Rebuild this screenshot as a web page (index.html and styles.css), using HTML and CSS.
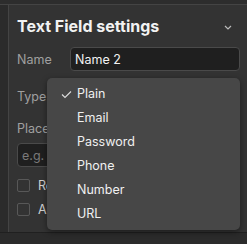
FILE: index.html
```html
<!DOCTYPE html>
<html lang="en">
<head>
    <meta charset="UTF-8">
    <title>Text Field settings</title>
    <link rel="stylesheet" href="styles.css">
</head>
<body>
    <div class="topbar"></div>
    <div class="main">
        <div class="rail"></div>
        <div class="panel">
            <div class="panel-head">
                <h1 class="panel-title">Text Field settings</h1>
                <svg class="chevron" width="8" height="5" viewBox="0 0 8 5">
                    <path d="M1 1 L4 4 L7 1" fill="none" stroke="#bbb" stroke-width="1.2"/>
                </svg>
            </div>

            <div class="field-row">
                <label class="field-label">Name</label>
                <input class="field-input" type="text" value="Name 2">
            </div>

            <div class="field-row">
                <label class="field-label">Type</label>
            </div>

            <div class="field-stack">
                <label class="field-label">Placeholder</label>
                <input class="field-input wide" type="text" placeholder="e.g. Enter your name">
            </div>

            <div class="check-row"><span class="checkbox"></span><span>Required</span></div>
            <div class="check-row"><span class="checkbox"></span><span>Autofocus</span></div>

            <!-- menu aberto do campo Type -->
            <ul class="menu">
                <li class="menu-item selected">
                    <svg class="check" width="11" height="9" viewBox="0 0 11 9">
                        <path d="M1 4.5 L4 7.5 L10 1.5" fill="none" stroke="#ddd" stroke-width="1.1"/>
                    </svg>
                    Plain
                </li>
                <li class="menu-item">Email</li>
                <li class="menu-item">Password</li>
                <li class="menu-item">Phone</li>
                <li class="menu-item">Number</li>
                <li class="menu-item">URL</li>
            </ul>
        </div>
    </div>
    <div class="footer"></div>
</body>
</html>
```

FILE: styles.css
```css
* {
    margin: 0;
    padding: 0;
    box-sizing: border-box;
}

body {
    font-family: Inter, "Liberation Sans", sans-serif;
    background-color: #2b2b2b;
    color: #fff;
    width: 247px;
    height: 244px;
    overflow: hidden;
}

.topbar {
    height: 5px;
    border-bottom: 1px solid #444;
    background-color: #2d2d2d;
}

.main {
    display: flex;
    height: 228px;
    border-bottom: 1px solid #202020;
}

.rail {
    flex: 0 0 9px;
    border-right: 1px solid #444;
    background-color: #2b2b2b;
}

.panel {
    position: relative;
    flex: 1;
    min-width: 0;
    background-color: #333;
    padding: 9px 7px 0 8px;
}

.panel-head {
    display: flex;
    align-items: center;
    justify-content: space-between;
    height: 24px;
    margin-bottom: 9px;
}

.panel-title {
    font-size: 16px;
    font-weight: 700;
    color: #f2f2f2;
}

.chevron {
    margin-right: 8px;
    margin-top: 2px;
}

.field-row {
    display: flex;
    align-items: center;
    height: 24px;
    margin-bottom: 13px;
}

.field-label {
    width: 53px;
    flex: none;
    font-size: 12.5px;
    color: #a0a0a0;
}

.field-input {
    flex: 1;
    min-width: 0;
    width: 0;
    height: 24px;
    background-color: #1f1f1f;
    border: 1px solid #4a4a4a;
    border-radius: 4px;
    color: #f2f2f2;
    font-family: inherit;
    font-size: 12.5px;
    padding: 0 4px;
    outline: none;
}

.field-input::placeholder {
    color: #7a7a7a;
}

.field-stack {
    display: flex;
    flex-direction: column;
    gap: 7px;
    margin-bottom: 12px;
}

.field-input.wide {
    flex: none;
    width: 100%;
}

.check-row {
    display: flex;
    align-items: center;
    gap: 8px;
    height: 13px;
    margin-bottom: 11px;
    font-size: 12.5px;
    color: #d0d0d0;
}

.checkbox {
    width: 13px;
    height: 13px;
    border: 1px solid #585858;
    border-radius: 2px;
}

.menu {
    position: absolute;
    left: 38px;
    top: 73px;
    width: 193px;
    height: 152px;
    list-style: none;
    background-color: #474747;
    border-radius: 5px;
    box-shadow: 0 2px 6px rgba(0, 0, 0, 0.45);
    padding-top: 4px;
}

.menu-item {
    position: relative;
    height: 24px;
    line-height: 24px;
    padding-left: 30px;
    font-size: 12.5px;
    color: #f0f0f0;
}

.check {
    position: absolute;
    left: 14px;
    top: 8px;
}

.footer {
    height: 11px;
    background-color: #2b2b2b;
}
```
